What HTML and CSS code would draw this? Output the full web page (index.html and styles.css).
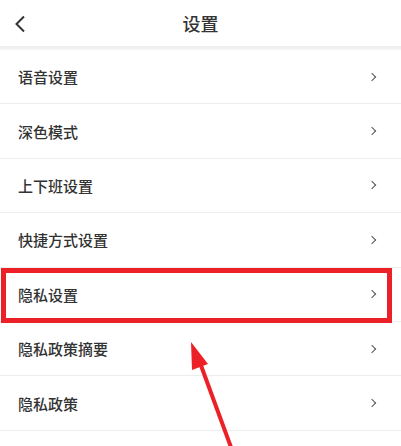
FILE: index.html
```html
<!DOCTYPE html>
<html lang="zh-CN">
<head>
    <meta charset="UTF-8">
    <meta name="viewport" content="width=device-width, initial-scale=1.0">
    <title>设置</title>
    <link rel="stylesheet" href="styles.css">
</head>
<body>
    <div class="page">
        <header class="top-bar">
            <span class="back">
                <svg width="12" height="18" viewBox="0 0 12 18"><path d="M10 1.5 L2.5 9 L10 16.5" fill="none" stroke="#333" stroke-width="2"/></svg>
            </span>
            <h1>设置</h1>
        </header>
        <div class="shade"></div>

        <ul class="menu">
            <li class="menu-item"><span>语音设置</span><i class="arrow"></i></li>
            <li class="menu-item"><span>深色模式</span><i class="arrow"></i></li>
            <li class="menu-item"><span>上下班设置</span><i class="arrow"></i></li>
            <li class="menu-item"><span>快捷方式设置</span><i class="arrow"></i></li>
            <li class="menu-item"><span>隐私设置</span><i class="arrow"></i></li>
            <li class="menu-item"><span>隐私政策摘要</span><i class="arrow"></i></li>
            <li class="menu-item"><span>隐私政策</span><i class="arrow"></i></li>
        </ul>

        <!-- 标注 -->
        <div class="highlight"></div>
        <svg class="pointer" width="401" height="446" viewBox="0 0 401 446">
            <line x1="232" y1="450" x2="199" y2="360" stroke="#ec2027" stroke-width="4"/>
            <polygon points="191,342 192,370 208,364" fill="#ec2027"/>
        </svg>
    </div>
</body>
</html>
```

FILE: styles.css
```css
body {
    margin: 0;
    background-color: #fff;
    font-family: "Noto Sans CJK SC", "Noto Sans", sans-serif;
    color: #333;
}

.page {
    position: relative;
    width: 401px;
    height: 446px;
    overflow: hidden;
}

.top-bar {
    height: 46px;
    display: flex;
    align-items: center;
    justify-content: center;
    position: relative;
}

.top-bar h1 {
    margin: 0;
    font-size: 18px;
    font-weight: 500;
    color: #333;
}

.back {
    position: absolute;
    left: 14px;
    top: 14px;
}

.shade {
    height: 4px;
    background: linear-gradient(#eeeeee, #f6f6f6);
}

.menu {
    list-style: none;
    margin: 0;
    padding: 0;
}

.menu-item {
    height: 53.4px;
    display: flex;
    align-items: center;
    justify-content: space-between;
    padding: 0 26px 0 18px;
    border-bottom: 1px solid #ededed;
    font-size: 15px;
    font-weight: 500;
    color: #333;
}

.arrow {
    width: 5px;
    height: 5px;
    border-top: 1.5px solid #555;
    border-right: 1.5px solid #555;
    transform: rotate(45deg);
}

.highlight {
    position: absolute;
    left: 1px;
    top: 268px;
    width: 381px;
    height: 45px;
    border: 5px solid #ec2027;
}

.pointer {
    position: absolute;
    left: 0;
    top: 0;
}
```
